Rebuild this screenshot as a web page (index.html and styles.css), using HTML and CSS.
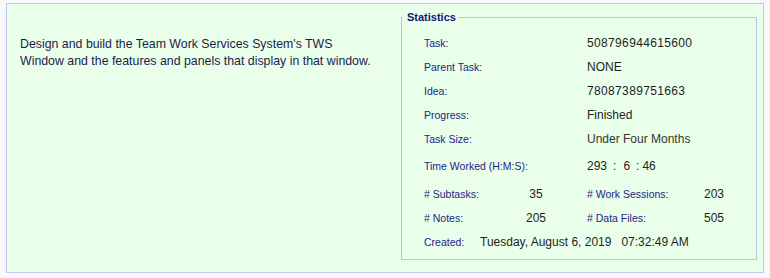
FILE: index.html
```html
<!DOCTYPE html>
<html lang="en">
<head>
  <meta charset="UTF-8" />
  <title>Task Statistics</title>
  <link rel="stylesheet" href="styles.css">
</head>
<body>

  <!-- Task Panel -->
  <div class="panel">
    <div class="description">
      Design and build the Team Work Services System's TWS<br>
      Window and the features and panels that display in that window.
    </div>

    <fieldset class="stats">
      <legend>Statistics</legend>
      <div class="row"><span class="label">Task:</span><span class="value digits">508796944615600</span></div>
      <div class="row"><span class="label">Parent Task:</span><span class="value">NONE</span></div>
      <div class="row"><span class="label">Idea:</span><span class="value digits">78087389751663</span></div>
      <div class="row"><span class="label">Progress:</span><span class="value">Finished</span></div>
      <div class="row"><span class="label">Task Size:</span><span class="value size">Under Four Months</span></div>
      <div class="row time"><span class="label">Time Worked (H:M:S):</span>
        <span class="value hms"><span>293</span><span class="sep">:</span><span>6</span><span class="sep last">:</span><span>46</span></span>
      </div>
      <div class="row counts subtasks">
        <span class="label">#&nbsp;Subtasks:</span><span class="num">35</span>
        <span class="label second">#&nbsp;Work Sessions:</span><span class="num">203</span>
      </div>
      <div class="row counts notes">
        <span class="label">#&nbsp;Notes:</span><span class="num">205</span>
        <span class="label second">#&nbsp;Data Files:</span><span class="num">505</span>
      </div>
      <div class="row created"><span class="label">Created:</span><span class="value">Tuesday, August 6, 2019&nbsp;&nbsp;&nbsp;07:32:49 AM</span></div>
    </fieldset>
  </div>

</body>
</html>
```

FILE: styles.css
```css
body { margin: 3px 6px; background: #f9f9fd; font-family: "Liberation Sans", Arial, sans-serif; }
.panel { display: flex; height: 270px; box-sizing: border-box; border: 1px solid #c4c4fa; background: #eaffea; }
.description { flex: 1; padding: 32px 0 0 13px; font-size: 12.35px; line-height: 17px; color: #1c1c4e; }

.stats { width: 356px; box-sizing: border-box; margin: 6px 6px 0 0; height: 250px; padding: 7px 0 0 22px; border: 1px solid #b4c6e4; min-width: 0; }
.stats legend { margin-left: -21px; padding: 0 2px 0 4px; font-size: 11px; line-height: 14px; font-weight: bold; color: #14147a; }

.row { display: flex; align-items: center; height: 24px; }
.label { width: 163px; font-size: 10.5px; color: #1e1e82; white-space: nowrap; }
.value { font-size: 12px; color: #1e1e1e; }
.value.digits { letter-spacing: 0.35px; }
.value.size { color: #333; }

.row.time { height: 30px; }
.hms { display: flex; }
.hms .sep { margin: 0 7px 0 6px; }
.hms .sep.last { margin: 0 3px 0 6px; }

.row.counts { display: grid; grid-template-columns: 86px 52px 25px 117px auto; }
.row.counts .label { width: auto; }
.row.counts .label.second { grid-column: 4; }
.row.counts .num { font-size: 12px; color: #1e1e1e; text-align: center; }
.row.counts .num:last-child { text-align: left; }
.subtasks { height: 26px; }
.notes { height: 21px; }

.row.created { height: 28px; }
.created .label { width: 56px; }
```
